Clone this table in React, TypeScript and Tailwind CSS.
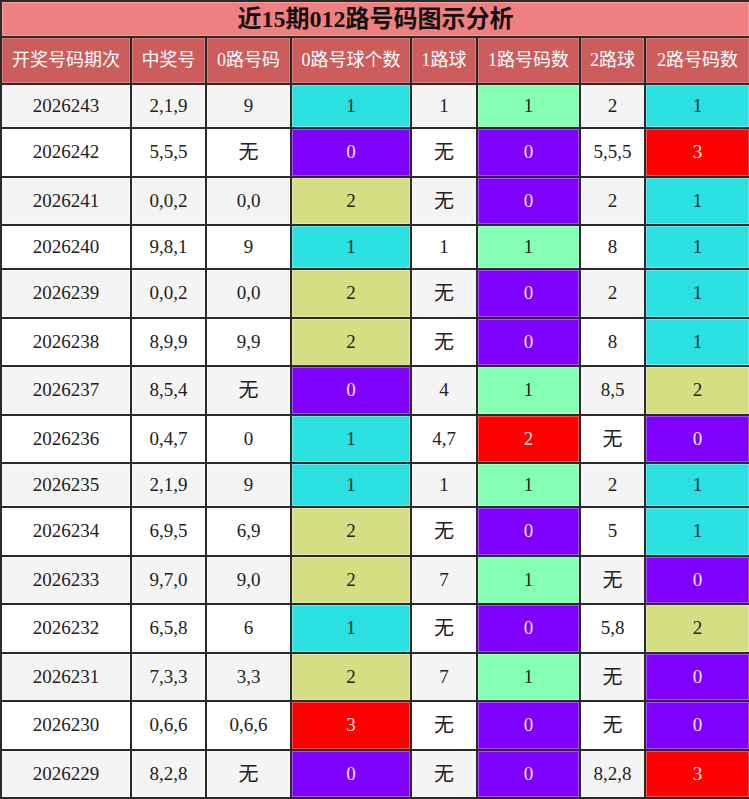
import React from "react";

const rows: string[][] = [
  ["2026243", "2,1,9", "9", "1", "1", "1", "2", "1"],
  ["2026242", "5,5,5", "无", "0", "无", "0", "5,5,5", "3"],
  ["2026241", "0,0,2", "0,0", "2", "无", "0", "2", "1"],
  ["2026240", "9,8,1", "9", "1", "1", "1", "8", "1"],
  ["2026239", "0,0,2", "0,0", "2", "无", "0", "2", "1"],
  ["2026238", "8,9,9", "9,9", "2", "无", "0", "8", "1"],
  ["2026237", "8,5,4", "无", "0", "4", "1", "8,5", "2"],
  ["2026236", "0,4,7", "0", "1", "4,7", "2", "无", "0"],
  ["2026235", "2,1,9", "9", "1", "1", "1", "2", "1"],
  ["2026234", "6,9,5", "6,9", "2", "无", "0", "5", "1"],
  ["2026233", "9,7,0", "9,0", "2", "7", "1", "无", "0"],
  ["2026232", "6,5,8", "6", "1", "无", "0", "5,8", "2"],
  ["2026231", "7,3,3", "3,3", "2", "7", "1", "无", "0"],
  ["2026230", "0,6,6", "0,6,6", "3", "无", "0", "无", "0"],
  ["2026229", "8,2,8", "无", "0", "无", "0", "8,2,8", "3"],
];

const headers = ["开奖号码期次", "中奖号", "0路号码", "0路号球个数", "1路球", "1路号码数", "2路球", "2路号码数"];
const widths = [130, 75, 85, 120, 66, 103, 65, 105];

// colour per count, 0路 / 2路 columns
const countColor: Record<string, string> = {
  "0": "bg-[#8000ff] text-[#f0e6ff]",
  "1": "bg-[#2ae0e0] text-[#222]",
  "2": "bg-[#d6de84] text-[#222]",
  "3": "bg-[#ff0000] text-[#ffe6e6]",
};

// 1路 column uses green for 1 and red for 2
const oneColor: Record<string, string> = {
  "0": "bg-[#8000ff] text-[#f0e6ff]",
  "1": "bg-[#84ffb4] text-[#222]",
  "2": "bg-[#ff0000] text-[#ffe6e6]",
  "3": "bg-[#ff0000] text-[#ffe6e6]",
};

const font = { fontFamily: '"Liberation Serif", "Noto Sans CJK SC", serif' };

export default function App() {
  return (
    <div className="w-[749px] bg-white" style={font}>
      <table className="w-[749px] table-fixed border-collapse">
        <colgroup>
          {widths.map((w, i) => (
            <col key={i} style={{ width: w }} />
          ))}
        </colgroup>
        <thead>
          <tr className="h-[36px]">
            <th
              colSpan={8}
              className="border-2 border-[#2a2a2a] bg-[#f08080] p-0 text-center text-[24px] leading-[28px] font-bold text-[#111] shadow-[inset_0_0_0_1px_rgba(255,255,255,0.25)]"
            >
              近15期012路号码图示分析
            </th>
          </tr>
          <tr className="h-[47px]">
            {headers.map((h) => (
              <th
                key={h}
                className="border-2 border-[#2a2a2a] bg-[#cd5c5c] p-0 text-center text-[18px] font-normal text-white shadow-[inset_0_0_0_1px_rgba(255,255,255,0.2)]"
              >
                {h}
              </th>
            ))}
          </tr>
        </thead>
        <tbody>
          {rows.map((r, i) => {
            const hasWu = r.includes("无");
            const base = i % 2 === 0 ? "bg-[#f4f4f4]" : "bg-white";
            return (
              <tr key={r[0]} className={hasWu ? "h-[48.5px]" : "h-[44px]"}>
                {r.map((v, j) => {
                  let cls = base + " text-[#222]";
                  if (j === 3 || j === 7) cls = countColor[v];
                  if (j === 5) cls = oneColor[v];
                  return (
                    <td
                      key={j}
                      className={`border-2 border-[#2a2a2a] p-0 text-center ${v === "无" ? "text-[20px]" : "text-[19px]"} ${cls} shadow-[inset_0_0_0_1px_rgba(255,255,255,0.3)]`}
                    >
                      {v}
                    </td>
                  );
                })}
              </tr>
            );
          })}
        </tbody>
      </table>
    </div>
  );
}
